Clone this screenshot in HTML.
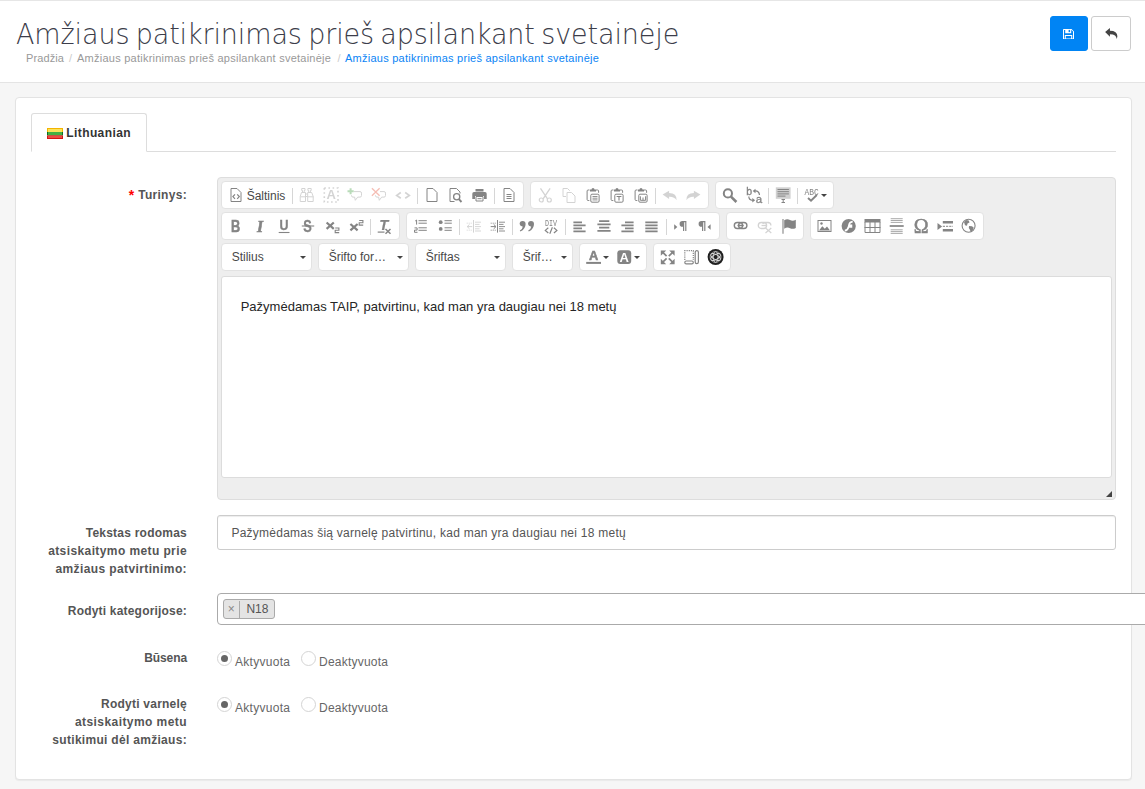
<!DOCTYPE html>
<html lang="lt">
<head>
<meta charset="utf-8">
<title>Amžiaus patikrinimas prieš apsilankant svetainėje</title>
<style>
*{box-sizing:border-box}
html,body{margin:0;padding:0}
body{width:1145px;height:789px;overflow:hidden;background:#f6f6f6;font-family:"Liberation Sans",sans-serif;font-size:12px;color:#666;position:relative}
#hdr{position:absolute;left:0;top:0;width:1145px;height:83px;background:#fff;border-bottom:1px solid #e4e4e4}
#hdr:before{content:"";position:absolute;left:0;top:0;width:1145px;height:1px;background:#e6e6e6}
#hdr h1{position:absolute;left:16px;top:16.600px;margin:0;font-family:"DejaVu Sans","Liberation Sans",sans-serif;font-size:27px;line-height:36px;font-weight:200;letter-spacing:-.12px;word-spacing:-2.100px;color:#3c3d4a;white-space:nowrap;transform-origin:0 27.400px;transform:scaleY(1.08)}
#bc{position:absolute;left:26px;top:51px;font-size:11px;letter-spacing:.245px;line-height:14px;color:#999;white-space:nowrap}
#bc span{position:absolute;top:0;white-space:nowrap}
#bc .last{color:#0a84f5}
#bc .sep{color:#ccc}
.btn{position:absolute;top:16px;height:35px;border-radius:3px}
#bsave{left:1050px;width:38px;background:#0084f4;border:1px solid #0084f4}
#bback{left:1091px;width:40px;background:#fff;border:1px solid #ccc}
.btn svg{position:absolute}
#panel{position:absolute;left:15px;top:97px;width:1117px;height:683px;background:#fff;border:1px solid #e3e3e3;border-radius:4px;box-shadow:0 1px 1px rgba(0,0,0,.05)}
#tabline{position:absolute;left:31px;top:151px;width:1085px;height:1px;background:#ddd}
#tab{position:absolute;left:31px;top:113px;width:116px;height:39px;border:1px solid #ddd;border-bottom:1px solid #fff;border-radius:3px 3px 0 0;background:#fff}
#tab .flag{position:absolute;left:15px;top:14px;width:16px;height:11px}
#tab .t{position:absolute;left:34.300px;letter-spacing:.4px;top:11px;font-weight:bold;color:#333;font-size:12px;line-height:16px;white-space:nowrap}
.lbl{position:absolute;width:172px;left:15px;text-align:right;font-weight:bold;color:#555;line-height:18px;font-size:12px}
.lbl span{display:block;white-space:nowrap}
.req{color:#f00;font-size:14px;line-height:12px;position:relative;top:1px}
#ed{position:absolute;left:217.4px;top:177px;width:899px;height:323px;background:#eee;border:1px solid #ddd;border-radius:4px}
#tb{position:absolute;left:3px;top:3px;width:890px}
.grp{float:left;height:28px;border:1px solid #e2e2e2;border-radius:4px;background:#fff;padding:1px 2px;margin:0 6px 3px 0}
.brk{clear:both}
.b{float:left;width:24px;height:24px;padding:4px}
.b svg{display:block;width:16px;height:16px;overflow:visible;position:relative;left:-.3px;will-change:transform}
.b.dis svg{opacity:.35}
.b.arr{width:31px;position:relative}
.b.arr i{position:absolute;left:21px;top:11px;width:0;height:0;border:3px solid transparent;border-top-color:#444;border-bottom:0}
.b.src{width:auto}
.b.src svg{float:left}
.b.src span{float:left;padding-left:2.300px;padding-right:1px;font-size:12px;line-height:16px;margin-top:1px;color:#484848}
.sp{float:left;width:1px;height:16px;margin:5px 2px 0;background:#d6d6d6}
.cb{float:left;width:91px;height:28px;border:1px solid #e2e2e2;border-radius:4px;background:#fff;margin:0 6px 3px 0;position:relative}
.cb span{position:absolute;left:9.300px;top:5px;font-size:12px;line-height:16px;color:#484848;white-space:nowrap}
.cb i{position:absolute;right:5.600px;top:12px;width:0;height:0;border:3px solid transparent;border-top-color:#444;border-bottom:0}
#ca{position:absolute;left:3px;top:98px;width:891px;height:202px;background:#fff;border:1px solid #dcdcdc;border-radius:3px}
#ca p{position:absolute;left:18.300px;top:19.600px;margin:0;font-size:13px;line-height:20px;color:#262626;white-space:nowrap}
#rz{position:absolute;right:3px;bottom:2px;width:0;height:0;border-style:solid;border-width:0 0 6px 6px;border-color:transparent transparent #444 transparent}
#inp{position:absolute;left:217.4px;top:515px;width:899px;height:35px;border:1px solid #ccc;border-radius:3px;background:#fff;box-shadow:inset 0 1px 1px rgba(0,0,0,.075)}
#inp span{position:absolute;left:13px;letter-spacing:.254px;top:9px;line-height:17px;font-size:12px;color:#555;white-space:nowrap}
#ch{position:absolute;left:217.4px;top:593px;width:940px;height:32px;border:1px solid #aaa;border-radius:4px;background:#fff}
#chip{position:absolute;left:5px;top:5px;width:52px;height:20px;border:1px solid #aaa;border-radius:3px;background:#e4e4e4}
#chip .x{position:absolute;left:-.7px;top:1px;width:16px;height:18px;border-right:1px solid #aaa;text-align:center;line-height:17px;font-size:12px;color:#888}
#chip .n{position:absolute;left:22px;top:0;line-height:18px;font-size:12px;color:#555}
.rad{position:absolute;width:15px;height:15px;border:1px solid #d4d4d4;border-radius:50%;background:#fff}
.rad.on:after{content:"";position:absolute;left:3px;top:3px;width:7px;height:7px;border-radius:50%;background:#666}
.rl{position:absolute;line-height:16px;font-size:12px;color:#666;white-space:nowrap}
</style>
</head>
<body>
<div id="hdr">
<h1>Amžiaus patikrinimas prieš apsilankant svetainėje</h1>
<div id="bc"><span style="left:0;letter-spacing:.1px">Pradžia</span><span class="sep" style="left:43px">/</span><span style="left:51px">Amžiaus patikrinimas prieš apsilankant svetainėje</span><span class="sep" style="left:311.500px">/</span><span class="last" style="left:319px">Amžiaus patikrinimas prieš apsilankant svetainėje</span></div>
<div class="btn" id="bsave"><svg viewBox="0 0 11 10.5" style="left:12.300px;top:11.500px;width:11px;height:10.500px"><path d="M0 .8q0-.8.8-.8h7.700l2.500 2.500v7.200q0 .8-.8.8h-9.400q-.8 0-.8-.8z" fill="#fff"/><path d="M1 1h1.200v3.200h6v-3.200h.2l1.600 1.600v6.900h-.8v-3.500h-7.400v3.500h-.8z" fill="#0084f4"/><rect x="5.600" y=".9" width="1.500" height="2.200" fill="#0084f4"/><rect x="2.800" y="7" width="5.400" height="2.500" fill="#0084f4"/></svg></div>
<div class="btn" id="bback"><svg viewBox="0 0 14 12" style="left:13px;top:11.200px;width:12.500px;height:10.500px"><path d="M0 4.500l5.500-4.500v3q8.500 0 8.500 6.500q0 1.500-1 3q.3-5.500-7.500-5.500v3z" fill="#444"/></svg></div>
</div>
<div id="panel"></div>
<div id="tabline"></div>
<div id="tab"><svg class="flag" viewBox="0 0 16 11"><rect width="16" height="4" fill="#f3b400"/><rect x="1" y="1" width="14" height="3" fill="#fbe25a"/><rect y="4" width="16" height="3.500" fill="#0c6e22"/><rect x="1" y="4" width="14" height="3.500" fill="#43b043"/><rect y="7.500" width="16" height="3.500" fill="#d41414"/><rect x="1" y="7.500" width="14" height="2.500" fill="#ea4a42"/></svg><span class="t">Lithuanian</span></div>

<div class="lbl" style="top:186px"><span style="letter-spacing:.3px"><b class="req">*</b> Turinys:</span></div>
<div id="ed">
<div id="tb"><div class="grp"><a class="b src"><svg viewBox="0 0 16 16"><path d="M3 1.500h6l4 4v9h-10z" fill="none" stroke="#848484" stroke-width="1"/><path d="M7 7.300L4.900 9.600 7 11.900M9.200 7.300l2.100 2.300-2.100 2.300" fill="none" stroke="#848484" stroke-width="1.2"/></svg><span>Šaltinis</span></a><span class="sp"></span><a class="b dis"><svg viewBox="0 0 16 16"><path d="M2.500 5.500h4v9h-5.300v-5zM8.700 5.500h4l1.500 4v5h-5.500zM3.500 5.500v-2h-.8v-2h3.300v2h-.8v2M9.700 5.500v-2h-.8v-2h3.300v2h-.8v2M6.500 7h2.200M6.500 9.500h2.200M1.200 9.800h5.300M8.700 9.800h5.800" fill="none" stroke="#848484" stroke-width="1"/></svg></a><a class="b dis"><svg viewBox="0 0 16 16"><rect x="1.300" y="1" width="13.700" height="14" fill="none" stroke="#848484" stroke-width="1.600" stroke-dasharray="1.600 2.530"/><text x="8.300" y="11.700" text-anchor="middle" font-family="Liberation Sans, sans-serif" font-weight="bold" font-size="13" fill="#848484">A</text></svg></a><a class="b dis"><svg viewBox="0 0 16 16"><path d="M7.0 4.600h6.0q1.500 0 1.500 1.500v2.500q0 1.500-1.500 1.500h-2.300l-2.400 3.200-.7-3.200h-1.600q-1.500 0-1.500-1.500v-.5" fill="none" stroke="#848484" stroke-width="1"/><path d="M3.600 1.200v6M.5 4.200h6.200" fill="none" stroke="#3a9a3a" stroke-width="2"/></svg></a><a class="b dis"><svg viewBox="0 0 16 16"><path d="M9.0 4.600h4.0q1.500 0 1.500 1.500v2.500q0 1.500-1.500 1.500h-2.300l-2.400 3.200-.7-3.200h-1.600q-1.500 0-1.500-1.500v-.5" fill="none" stroke="#848484" stroke-width="1"/><path d="M.9 1.200l7.700 7.500M8.600 1.200l-7.700 7.500" fill="none" stroke="#e2452a" stroke-width="1.300"/></svg></a><a class="b dis"><svg viewBox="0 0 16 16"><path d="M5.800 5.500L1.700 8.400 5.800 11.200M10.200 5.500l4.100 2.900-4.100 2.800" fill="none" stroke="#848484" stroke-width="1.7"/></svg></a><span class="sp"></span><a class="b"><svg viewBox="0 0 16 16"><path d="M3 1.500h6l4 4v9h-10z" fill="none" stroke="#848484" stroke-width="1"/></svg></a><a class="b"><svg viewBox="0 0 16 16"><path d="M12 6.500v-1.500l-3.500-3.500h-6.500v13h4.500" fill="none" stroke="#848484" stroke-width="1"/><circle cx="8.700" cy="9.800" r="3.100" fill="none" stroke="#848484" stroke-width="1.3"/><path d="M10.900 12.200l2.600 2.800" fill="none" stroke="#848484" stroke-width="1.9"/></svg></a><a class="b"><svg viewBox="0 0 16 16"><path d="M3.500 2h8v2.500h-8z" fill="#848484"/><path d="M2 5h11q1.700 0 1.700 1.700v5.300h-2.700v-3h-9v3h-2.700v-5.300q0-1.700 1.700-1.700z" fill="#848484"/><path d="M4 9.500h7v4.500h-7z" fill="none" stroke="#848484" stroke-width="1"/><path d="M5.500 11.700h4" fill="none" stroke="#848484" stroke-width="1"/></svg></a><span class="sp"></span><a class="b"><svg viewBox="0 0 16 16"><path d="M3 1.500h6l4 4v9h-10z" fill="none" stroke="#848484" stroke-width="1"/><path d="M5.500 7.500h5M5.500 9.500h5M5.500 11.500h5" fill="none" stroke="#848484" stroke-width="1"/></svg></a></div><div class="grp"><a class="b dis"><svg viewBox="0 0 16 16"><path d="M3.500 1.300l7 10.500M13.100 1.300l-7 10.500" fill="none" stroke="#848484" stroke-width="1.3"/><circle cx="4.300" cy="13" r="2" fill="none" stroke="#848484" stroke-width="1.2"/><circle cx="12.300" cy="13" r="2" fill="none" stroke="#848484" stroke-width="1.2"/></svg></a><a class="b dis"><svg viewBox="0 0 16 16"><path d="M5 9.500h-3v-8h4.500l2.300 2.300" fill="none" stroke="#848484" stroke-width="1"/><path d="M6 5.500h4.500l3.500 3.500v6.500h-8z" fill="none" stroke="#848484" stroke-width="1"/></svg></a><a class="b"><svg viewBox="0 0 16 16"><path d="M4.500 3h-1.400q-1 0-1 1v8.500q0 1 1 1h1.200" fill="none" stroke="#848484" stroke-width="1"/><path d="M11 3h1.600q1 0 1 1v1.800" fill="none" stroke="#848484" stroke-width="1"/><path d="M5 2.500h1.500q0-1.500 1.500-1.500t1.500 1.500h1.500v2h-6z" fill="#848484"/><rect x="5.800" y="7.200" width="8.300" height="8" rx="1.200" fill="none" stroke="#848484" stroke-width="1"/><path d="M7.500 9.500h5M7.500 11.200h5M7.500 12.900h5" fill="none" stroke="#848484" stroke-width="0.9"/></svg></a><a class="b"><svg viewBox="0 0 16 16"><path d="M4.500 3h-1.400q-1 0-1 1v8.500q0 1 1 1h1.200" fill="none" stroke="#848484" stroke-width="1"/><path d="M11 3h1.600q1 0 1 1v1.800" fill="none" stroke="#848484" stroke-width="1"/><path d="M5 2.500h1.500q0-1.500 1.500-1.500t1.500 1.500h1.500v2h-6z" fill="#848484"/><rect x="5.800" y="7.200" width="8.300" height="8" rx="1.200" fill="none" stroke="#848484" stroke-width="1"/><path d="M7.600 9.500h4.800M10 9.500v4" fill="none" stroke="#848484" stroke-width="1.1"/></svg></a><a class="b"><svg viewBox="0 0 16 16"><path d="M4.500 3h-1.400q-1 0-1 1v8.500q0 1 1 1h1.200" fill="none" stroke="#848484" stroke-width="1"/><path d="M11 3h1.600q1 0 1 1v1.800" fill="none" stroke="#848484" stroke-width="1"/><path d="M5 2.500h1.500q0-1.500 1.500-1.500t1.500 1.500h1.500v2h-6z" fill="#848484"/><rect x="5.800" y="7.200" width="8.300" height="8" rx="1.200" fill="none" stroke="#848484" stroke-width="1"/><path d="M7.400 9.300v4h5.200v-4M10 10.500v2.800" fill="none" stroke="#848484" stroke-width="1"/></svg></a><span class="sp"></span><a class="b dis"><svg viewBox="0 0 16 16"><path d="M.6 7.500l6.500-3.800v2.300q7.800 0 7.500 7.200q-2-3.700-7.500-3.500v2.300z" fill="#848484"/></svg></a><a class="b dis"><svg viewBox="0 0 16 16"><path d="M14.400 7.500l-6.500-3.800v2.300q-7.800 0-7.500 7.200q2-3.700 7.500-3.500v2.300z" fill="#848484"/></svg></a></div><div class="grp"><a class="b"><svg viewBox="0 0 16 16"><circle cx="5.900" cy="6.400" r="4.100" fill="none" stroke="#848484" stroke-width="2"/><path d="M9 9.600l5.400 5.400" fill="none" stroke="#848484" stroke-width="2.6"/></svg></a><a class="b"><svg viewBox="0 0 16 16"><text x=".3" y="7.600" font-family="Liberation Sans, sans-serif" font-size="10.500" fill="#848484" stroke="#848484" stroke-width=".300">b</text><text x="9.800" y="16" font-family="Liberation Sans, sans-serif" font-size="11.500" fill="#848484" stroke="#848484" stroke-width=".300">a</text><path d="M8.500 4q4.500-.5 5 4" fill="none" stroke="#848484" stroke-width="1.2"/><path d="M9.500 1.800v4.400l-2.800-2.200z" fill="#848484"/><path d="M2.800 9.500q0 3.500 4 3.800" fill="none" stroke="#848484" stroke-width="1.2"/><path d="M6.300 11v4.400l2.800-2.200z" fill="#848484"/></svg></a><span class="sp"></span><a class="b"><svg viewBox="0 0 16 16"><rect x=".8" y=".3" width="14.800" height="11.500" fill="#848484" opacity=".38"/><path d="M2.500 2.500h11.400M2.500 4.700h11.400M2.500 6.900h11.400M2.500 9.100h8" fill="none" stroke="#848484" stroke-width="1"/><path d="M6.500 12.500h3.500M8.200 12.500v3M6.500 15.500h3.500" fill="none" stroke="#848484" stroke-width="1"/></svg></a><span class="sp"></span><a class="b arr"><svg viewBox="0 0 16 16"><text x=".5" y="7.600" font-family="Liberation Mono, monospace" font-size="9.500" textLength="14.200" lengthAdjust="spacingAndGlyphs" fill="#848484">ABC</text><path d="M4 11l3 2.700 5.800-5.700" fill="none" stroke="#848484" stroke-width="1.9"/></svg><i></i></a></div><div class="brk"></div><div class="grp"><a class="b"><svg viewBox="0 0 16 16"><text transform="translate(7.600 13.800) scale(.8 1)" text-anchor="middle" font-family="Liberation Sans, sans-serif" font-weight="bold" font-size="16" fill="#848484" stroke="#848484" stroke-width=".500">B</text></svg></a><a class="b"><svg viewBox="0 0 16 16"><text transform="translate(8 13.800) scale(.95 1)" text-anchor="middle" font-family="Liberation Serif, serif" font-style="italic" font-weight="bold" font-size="16.500" fill="#848484" stroke="#848484" stroke-width=".600">I</text></svg></a><a class="b"><svg viewBox="0 0 16 16"><text transform="translate(8 11.600) scale(.86 1)" text-anchor="middle" font-family="Liberation Sans, sans-serif" font-weight="bold" font-size="14.500" fill="#848484" stroke="#848484" stroke-width=".300">U</text><path d="M2.700 14.500h10.800" fill="none" stroke="#848484" stroke-width="1.1"/></svg></a><a class="b"><svg viewBox="0 0 16 16"><text transform="translate(7.600 13.700) scale(.8 1)" text-anchor="middle" font-family="Liberation Sans, sans-serif" font-weight="bold" font-size="16" fill="#848484" stroke="#848484" stroke-width=".300">S</text><path d="M1.800 8h12.400" fill="none" stroke="#848484" stroke-width="1.1"/></svg></a><a class="b"><svg viewBox="0 0 16 16"><path d="M2.600 4.500l7.200 6.400M9.800 4.500l-7.200 6.400" fill="none" stroke="#848484" stroke-width="2.2"/><path d="M11.2 10h3.700v2.300h-3.700v2.300h4" fill="none" stroke="#848484" stroke-width="1.1"/></svg></a><a class="b"><svg viewBox="0 0 16 16"><path d="M2.400 6l7.200 6.400M9.600 6l-7.200 6.400" fill="none" stroke="#848484" stroke-width="2.2"/><path d="M11.2 2.5h3.700v2.300h-3.700v2.300h4" fill="none" stroke="#848484" stroke-width="1.1"/></svg></a><span class="sp"></span><a class="b"><svg viewBox="0 0 16 16"><text x="6.800" y="12.200" text-anchor="middle" font-family="Liberation Sans, sans-serif" font-style="italic" font-weight="bold" font-size="14.800" fill="#848484" stroke="#848484" stroke-width=".200">T</text><path d="M.7 14.100h6.800" fill="none" stroke="#848484" stroke-width="1.2"/><path d="M8.500 11l5 4.700M13.500 11l-5 4.700" fill="none" stroke="#848484" stroke-width="1.5"/></svg></a></div><div class="grp"><a class="b"><svg viewBox="0 0 16 16"><path d="M5.500 2.700h8.300M5.500 5.200h8.300M5.500 9.800h8.300M5.500 12.300h8.300" fill="none" stroke="#848484" stroke-width="1"/><path d="M2.200 3l1.400-1v4.600" fill="none" stroke="#848484" stroke-width="1"/><path d="M1.500 9.900h2.600v2.200h-2.600v2.200h3" fill="none" stroke="#848484" stroke-width="1"/></svg></a><a class="b"><svg viewBox="0 0 16 16"><path d="M7.500 2.700h7.300M7.500 5.200h7.300M7.500 9.800h7.300M7.500 12.300h7.300" fill="none" stroke="#848484" stroke-width="1"/><circle cx="3.700" cy="4.200" r="1.900" fill="#848484"/><circle cx="3.700" cy="10.900" r="1.900" fill="#848484"/></svg></a><span class="sp"></span><a class="b dis"><svg viewBox="0 0 16 16"><path d="M7.500 2v12.600" fill="none" stroke="#848484" stroke-width="1"/><path d="M9 4.200h6M9 6.400h4.500M9 8.600h6M9 10.800h4.500M9 13h6" fill="none" stroke="#848484" stroke-width="0.9"/><path d="M.7 5.200h5.500M.7 12.200h5.500" fill="none" stroke="#848484" stroke-width="0.9" stroke-dasharray="1 1"/><path d="M1 8.600h5.200M3.500 6.400l-2.300 2.200 2.300 2.200" fill="none" stroke="#848484" stroke-width="1"/></svg></a><a class="b"><svg viewBox="0 0 16 16"><path d="M7.500 2v12.600" fill="none" stroke="#848484" stroke-width="1"/><path d="M9 4.200h6M9 6.400h4.500M9 8.600h6M9 10.800h4.500M9 13h6" fill="none" stroke="#848484" stroke-width="0.9"/><path d="M.7 5.200h5.500M.7 12.200h5.500" fill="none" stroke="#848484" stroke-width="0.9" stroke-dasharray="1 1"/><path d="M.7 8.600h5M3.700 6.400l2.300 2.200-2.300 2.200" fill="none" stroke="#848484" stroke-width="1"/></svg></a><span class="sp"></span><a class="b"><svg viewBox="0 0 16 16"><path d="M0.6 6a3 3 0 1 1 6 0q0 5-5.200 7.600l-.6-1q3-2 3-4.200a3 3 0 0 1-3.200-2.400z" fill="#848484"/><path d="M9 6a3 3 0 1 1 6 0q0 5-5.200 7.600l-.6-1q3-2 3-4.200a3 3 0 0 1-3.200-2.400z" fill="#848484"/></svg></a><a class="b"><svg viewBox="0 0 16 16"><text x="8.100" y="8" text-anchor="middle" font-family="Liberation Mono, monospace" font-size="9" textLength="12" lengthAdjust="spacingAndGlyphs" fill="#848484">DIV</text><path d="M5.300 9.800l-3 2.600 3 2.600M10.900 9.800l3 2.600-3 2.600M9.400 9.300l-2.600 6.400" fill="none" stroke="#848484" stroke-width="1.2"/></svg></a><span class="sp"></span><a class="b"><svg viewBox="0 0 16 16"><path d="M1.400 4.400h8.600M1.400 7.400h12.200M1.400 10.400h8.600M1.400 13.400h12.200" fill="none" stroke="#848484" stroke-width="1.8"/></svg></a><a class="b"><svg viewBox="0 0 16 16"><path d="M3.100 3.100h10.200M1.400 6.300h13.200M3.100 9.700h10.200M1.400 12.900h13.200" fill="none" stroke="#848484" stroke-width="1.8"/></svg></a><a class="b"><svg viewBox="0 0 16 16"><path d="M5 4.400h8.600M1.400 7.400h12.200M5 10.400h8.600M1.400 13.400h12.200" fill="none" stroke="#848484" stroke-width="1.8"/></svg></a><a class="b"><svg viewBox="0 0 16 16"><path d="M1.300 4.400h12.300M1.300 7.400h12.300M1.300 10.400h12.300M1.300 13.400h12.300" fill="none" stroke="#848484" stroke-width="1.8"/></svg></a><span class="sp"></span><a class="b"><svg viewBox="0 0 16 16"><path d="M13.4 3.100h-4a2.800 2.800 0 0 0 0 5.600h.6v4.200h1.200v-8.600h1v8.600h1.200z" fill="#848484"/><path d="M1.200 6.200l3.100 2.800-3.100 2.800z" fill="#848484"/></svg></a><a class="b"><svg viewBox="0 0 16 16"><path d="M8.4 3.100h-4a2.800 2.800 0 0 0 0 5.600h.6v4.200h1.200v-8.600h1v8.600h1.200z" fill="#848484"/><path d="M13.600 6.200l-3.100 2.800 3.100 2.800z" fill="#848484"/></svg></a></div><div class="grp"><a class="b"><svg viewBox="0 0 16 16"><rect x="1.300" y="4.500" width="8.300" height="6" rx="3" fill="none" stroke="#848484" stroke-width="1.4"/><rect x="5.600" y="4.500" width="8.300" height="6" rx="3" fill="none" stroke="#848484" stroke-width="1.4"/><path d="M4.500 7.500h6.200" fill="none" stroke="#848484" stroke-width="1.4"/></svg></a><a class="b dis"><svg viewBox="0 0 16 16"><rect x="1.300" y="4.500" width="8.300" height="6" rx="3" fill="none" stroke="#848484" stroke-width="1.3"/><path d="M6 6q0-1.500 2-1.500h3a3 3 0 0 1 2.900 3" fill="none" stroke="#848484" stroke-width="1.3"/><path d="M4.500 7.500h4.500" fill="none" stroke="#848484" stroke-width="1.3"/><path d="M8.500 10l5.800 5M14.300 10l-5.800 5" fill="none" stroke="#848484" stroke-width="1.2"/></svg></a><a class="b"><svg viewBox="0 0 16 16"><path d="M2 1v14.700" fill="none" stroke="#848484" stroke-width="1.1"/><path d="M3.200 2.200q3-1.700 5.800-.2t5.800-.3v8.200q-3 1.700-5.800.3t-5.800.5z" fill="#848484"/></svg></a></div><div class="grp"><a class="b"><svg viewBox="0 0 16 16"><rect x="1" y="2.500" width="13" height="11" fill="none" stroke="#848484" stroke-width="1"/><path d="M2 12.500l3.300-4.200 2.500 2.500 2.200-2.300 3 4z" fill="#848484"/><circle cx="4.500" cy="5.500" r="1.200" fill="#848484"/></svg></a><a class="b"><svg viewBox="0 0 16 16"><circle cx="7.700" cy="8" r="7.100" fill="#848484"/><path d="M11.700 3.600q-3.300.3-3.800 3.700h2.500v1.500h-2.800q-.8 3.600-3.800 3.900" fill="none" stroke="#fff" stroke-width="1.700"/></svg></a><a class="b"><svg viewBox="0 0 16 16"><rect x="-.5" y="1" width="16" height="3.500" fill="#848484"/><path d="M0 4v10.500h15v-10.500M-.5 9.500h16M5 4v10.500M10 4v10.500" fill="none" stroke="#848484" stroke-width="1"/></svg></a><a class="b"><svg viewBox="0 0 16 16"><path d="M1.700 .7h12M1.700 2.500h12M1.700 4.400h12M1.700 11.800h12M1.700 13.600h12M1.700 15.400h12" fill="none" stroke="#848484" stroke-width="0.7"/><path d="M.7 8h14" fill="none" stroke="#848484" stroke-width="1.7"/></svg></a><a class="b"><svg viewBox="0 0 16 16"><text x="8.200" y="14.600" text-anchor="middle" font-family="Liberation Serif, serif" font-size="20" fill="#848484" stroke="#848484" stroke-width=".500">Ω</text></svg></a><a class="b"><svg viewBox="0 0 16 16"><path d="M.5 5l4.600 3.500-4.600 3.500z" fill="#848484"/><path d="M5.800 4.300h10.200M5.800 12.300h10.200" fill="none" stroke="#848484" stroke-width="2.4"/><path d="M5.800 8.300h10.200" fill="none" stroke="#848484" stroke-width="1" stroke-dasharray="2.200 1"/></svg></a><a class="b"><svg viewBox="0 0 16 16"><circle cx="7.600" cy="7.800" r="6.500" fill="none" stroke="#848484" stroke-width="1.1"/><path d="M3 4l2.500-2 2.300 .5.700 2-2 1-.5 2.200-2-.5zM8 8l3 .3 1.800 1.500-1 2.200-2 2-1-2.500-1-1.500z" fill="#848484"/></svg></a></div><div class="brk"></div><div class="cb"><span>Stilius</span><i></i></div><div class="cb"><span>Šrifto for…</span><i></i></div><div class="cb"><span>Šriftas</span><i></i></div><div class="cb" style="width:61px"><span>Šrif…</span><i></i></div><div class="grp"><a class="b arr"><svg viewBox="0 0 16 16"><text x="7.600" y="10.600" text-anchor="middle" font-family="Liberation Sans, sans-serif" font-weight="bold" font-size="12.800" fill="#848484" stroke="#848484" stroke-width=".500">A</text><path d="M.2 13.900h14.800" fill="none" stroke="#848484" stroke-width="2"/></svg><i></i></a><a class="b arr"><svg viewBox="0 0 16 16"><rect x=".3" y="1.200" width="13.900" height="13.800" rx="3" fill="#848484"/><text x="7.200" y="12.900" text-anchor="middle" font-family="Liberation Sans, sans-serif" font-weight="bold" font-size="13" fill="#fff">A</text></svg><i></i></a></div><div class="grp"><a class="b"><svg viewBox="0 0 16 16"><path d="M0.8 1.4l5.4 0l-5.4 5.4z" fill="#848484"/><path d="M2.3 2.9l4.3 4.3" fill="none" stroke="#848484" stroke-width="1.7"/><path d="M14.6 1.4l-5.4 0l5.4 5.4z" fill="#848484"/><path d="M13.1 2.9l-4.3 4.3" fill="none" stroke="#848484" stroke-width="1.7"/><path d="M0.8 15.2l5.4 0l-5.4 -5.4z" fill="#848484"/><path d="M2.3 13.7l4.3 -4.3" fill="none" stroke="#848484" stroke-width="1.7"/><path d="M14.6 15.2l-5.4 0l5.4 -5.4z" fill="#848484"/><path d="M13.1 13.7l-4.3 -4.3" fill="none" stroke="#848484" stroke-width="1.7"/></svg></a><a class="b"><svg viewBox="0 0 16 16"><path d="M.8 11v-9.300h8.500v9.300" fill="none" stroke="#848484" stroke-width="1.2" stroke-dasharray="1.200 1"/><rect x="11.200" y="1.700" width="3.200" height="13" rx="1.600" fill="none" stroke="#848484" stroke-width="1.2"/><rect x=".8" y="12" width="8.500" height="2.800" rx="1.400" fill="none" stroke="#848484" stroke-width="1.2"/></svg></a><a class="b"><svg viewBox="0 0 16 16"><circle cx="7.600" cy="8" r="8" fill="#1f1f1f"/><g fill="none" stroke="#ddd" stroke-width=".900"><ellipse cx="7.600" cy="8" rx="2.400" ry="5.300" /><ellipse cx="7.600" cy="8" rx="2.400" ry="5.300" transform="rotate(60 7.600 8)"/><ellipse cx="7.600" cy="8" rx="2.400" ry="5.300" transform="rotate(120 7.600 8)"/><circle cx="7.600" cy="8" r="5.600" stroke-width=".500"/></g></svg></a></div></div>
<div id="ca"><p>Pažymėdamas TAIP, patvirtinu, kad man yra daugiau nei 18 metų</p></div>
<div id="rz"></div>
</div>

<div class="lbl" style="top:524px"><span style="letter-spacing:0.23px">Tekstas rodomas</span><span style="letter-spacing:0.4px">atsiskaitymo metu prie</span><span style="letter-spacing:0.39px">amžiaus patvirtinimo:</span></div>
<div id="inp"><span>Pažymėdamas šią varnelę patvirtinu, kad man yra daugiau nei 18 metų</span></div>

<div class="lbl" style="top:601.600px"><span style="letter-spacing:0.19px">Rodyti kategorijose:</span></div>
<div id="ch"><div id="chip"><span class="x">×</span><span class="n">N18</span></div></div>

<div class="lbl" style="top:649px"><span style="letter-spacing:-0.1px">Būsena</span></div>
<div class="rad on" style="left:217px;top:651px"></div><span class="rl" style="left:235px;top:654px;letter-spacing:.29px">Aktyvuota</span>
<div class="rad" style="left:301px;top:651px"></div><span class="rl" style="left:319px;top:654px;letter-spacing:.22px">Deaktyvuota</span>

<div class="lbl" style="top:695px"><span style="letter-spacing:0.23px">Rodyti varnelę</span><span style="letter-spacing:0.43px">atsiskaitymo metu</span><span style="letter-spacing:0.3px">sutikimui dėl amžiaus:</span></div>
<div class="rad on" style="left:217px;top:697px"></div><span class="rl" style="left:235px;top:700px;letter-spacing:.29px">Aktyvuota</span>
<div class="rad" style="left:301px;top:697px"></div><span class="rl" style="left:319px;top:700px;letter-spacing:.22px">Deaktyvuota</span>
</body>
</html>
